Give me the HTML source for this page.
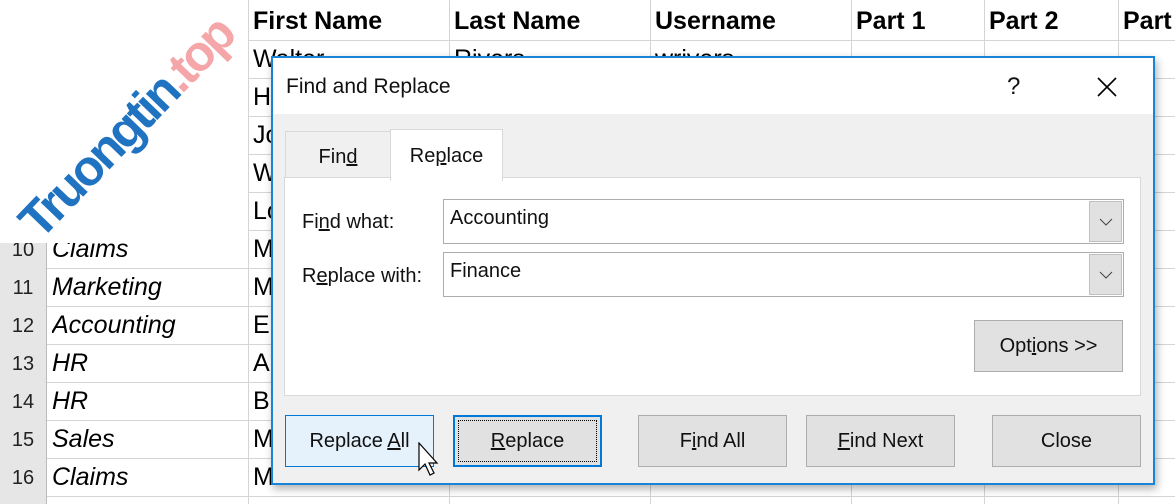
<!DOCTYPE html>
<html><head><style>
*{margin:0;padding:0;box-sizing:border-box}
body{width:1175px;height:504px;overflow:hidden;background:#fff;font-family:"Liberation Sans",sans-serif;position:relative}
.c{position:absolute;font-size:25px;color:#000;white-space:nowrap;overflow:hidden}
.hl{position:absolute;height:1px;background:#d4d4d4;left:0;width:1175px}
.vl{position:absolute;width:1px;background:#d4d4d4;top:0;height:504px}
.rn{position:absolute;left:0;width:47px;background:#e6e6e6;font-size:20px;color:#222;text-align:center;border-right:1px solid #bbb}
.dlg{position:absolute;left:271px;top:56px;width:884px;height:429px;background:#f0f0f0;border:2px solid #1883d7;box-shadow:2px 4px 8px rgba(0,0,0,.3);font-size:20px;color:#111}
.btn{position:absolute;top:357px;height:52px;width:149px;background:#e1e1e1;border:1px solid #adadad;text-align:center;line-height:50px;font-size:20px}
.dd{position:absolute;right:1px;top:1px;width:33px;height:41px;background:#e1e1e1;border:1px solid #c0c0c0}
u{text-decoration:underline}
</style></head><body>
<div class="hl" style="top:40px"></div><div class="hl" style="top:78px"></div><div class="hl" style="top:116px"></div><div class="hl" style="top:154px"></div><div class="hl" style="top:192px"></div><div class="hl" style="top:230px"></div><div class="hl" style="top:268px"></div><div class="hl" style="top:306px"></div><div class="hl" style="top:344px"></div><div class="hl" style="top:382px"></div><div class="hl" style="top:420px"></div><div class="hl" style="top:458px"></div><div class="hl" style="top:496px"></div>
<div class="vl" style="left:248px"></div><div class="vl" style="left:449px"></div><div class="vl" style="left:650px"></div><div class="vl" style="left:851px"></div><div class="vl" style="left:984px"></div><div class="vl" style="left:1118px"></div>
<div class="rn" style="top:230px;height:38px;line-height:40px">10</div>
<div class="rn" style="top:268px;height:38px;line-height:40px">11</div>
<div class="rn" style="top:306px;height:38px;line-height:40px">12</div>
<div class="rn" style="top:344px;height:38px;line-height:40px">13</div>
<div class="rn" style="top:382px;height:38px;line-height:40px">14</div>
<div class="rn" style="top:420px;height:38px;line-height:40px">15</div>
<div class="rn" style="top:458px;height:38px;line-height:40px">16</div>
<div class="rn" style="top:496px;height:8px"></div>
<div class="c" style="left:253px;top:7px;font-weight:bold">First Name</div>
<div class="c" style="left:454px;top:7px;font-weight:bold">Last Name</div>
<div class="c" style="left:655px;top:7px;font-weight:bold">Username</div>
<div class="c" style="left:856px;top:7px;font-weight:bold">Part 1</div>
<div class="c" style="left:989px;top:7px;font-weight:bold">Part 2</div>
<div class="c" style="left:1123px;top:7px;font-weight:bold">Part</div>
<div class="c" style="left:253px;top:45px">Walter</div><div class="c" style="left:454px;top:45px">Rivers</div><div class="c" style="left:655px;top:45px">wrivers</div>
<div class="c" style="left:253px;top:83px">H</div><div class="c" style="left:253px;top:121px">Jo</div><div class="c" style="left:253px;top:159px">W</div><div class="c" style="left:253px;top:197px">Lo</div><div class="c" style="left:253px;top:235px">M</div><div class="c" style="left:253px;top:273px">M</div><div class="c" style="left:253px;top:311px">El</div><div class="c" style="left:253px;top:349px">A</div><div class="c" style="left:253px;top:387px">B</div><div class="c" style="left:253px;top:425px">M</div><div class="c" style="left:253px;top:463px">Maria</div>
<div class="c" style="left:454px;top:463px">Menzies</div><div class="c" style="left:655px;top:463px">mmenzies</div>
<div class="c" style="left:856px;top:463px">X</div><div class="c" style="left:989px;top:463px">X</div><div class="c" style="left:1123px;top:463px">X</div>
<div class="c" style="left:52px;top:235px;font-style:italic">Claims</div>
<div class="c" style="left:52px;top:273px;font-style:italic">Marketing</div>
<div class="c" style="left:52px;top:311px;font-style:italic">Accounting</div>
<div class="c" style="left:52px;top:349px;font-style:italic">HR</div>
<div class="c" style="left:52px;top:387px;font-style:italic">HR</div>
<div class="c" style="left:52px;top:425px;font-style:italic">Sales</div>
<div class="c" style="left:52px;top:463px;font-style:italic">Claims</div>
<div style="position:absolute;left:0;top:0;width:248px;height:243px;overflow:hidden;background:#fff">
<div style="position:absolute;left:10px;top:212px;transform:rotate(-46deg);transform-origin:left top;font-size:50px;font-weight:bold;white-space:nowrap;letter-spacing:-3px;line-height:1"><span style="color:#1f73c0">Truongtin</span><span style="color:#f4a6a8">.top</span></div>
</div>
<div class="dlg">
<div style="position:absolute;left:0;top:0;width:880px;height:56px;background:#fff"></div>
<div style="position:absolute;left:13px;top:17px;font-size:21px">Find and Replace</div>
<div style="position:absolute;left:734px;top:15px;font-size:24px">?</div>
<svg style="position:absolute;left:824px;top:19px" width="20" height="20"><path d="M1 1L19 19M19 1L1 19" stroke="#000" stroke-width="1.6"/></svg>
<div style="position:absolute;left:12px;top:73px;width:106px;height:49px;border:1px solid #d9d9d9;border-bottom:none;text-align:center;line-height:50px">Fin<u>d</u></div>
<div style="position:absolute;left:117px;top:71px;width:113px;height:52px;background:#fff;border:1px solid #d9d9d9;border-bottom:none;text-align:center;line-height:52px;z-index:2">Re<u>p</u>lace</div>
<div style="position:absolute;left:11px;top:119px;width:857px;height:219px;background:#fff;border:1px solid #d9d9d9"></div>
<div style="position:absolute;left:29px;top:153px">Fi<u>n</u>d what:</div>
<div style="position:absolute;left:29px;top:207px">R<u>e</u>place with:</div>
<div style="position:absolute;left:170px;top:141px;width:681px;height:45px;border:1px solid #adadad;background:#fff;padding:7px 6px">Accounting<div class="dd"><svg style="position:absolute;left:9px;top:16px" width="14" height="8"><path d="M1 1L7 7L13 1" stroke="#444" fill="none"/></svg></div></div>
<div style="position:absolute;left:170px;top:194px;width:681px;height:45px;border:1px solid #adadad;background:#fff;padding:7px 6px">Finance<div class="dd"><svg style="position:absolute;left:9px;top:16px" width="14" height="8"><path d="M1 1L7 7L13 1" stroke="#444" fill="none"/></svg></div></div>
<div class="btn" style="left:701px;top:262px">Opt<u>i</u>ons &gt;&gt;</div>
<div class="btn" style="left:12px;background:#e5f1fb;border-color:#0078d7">Replace <u>A</u>ll</div>
<div class="btn" style="left:180px;border:2px solid #0078d7;line-height:48px"><div style="position:absolute;inset:3px;border:1px dotted #000"></div><u>R</u>eplace</div>
<div class="btn" style="left:365px">F<u>i</u>nd All</div>
<div class="btn" style="left:533px"><u>F</u>ind Next</div>
<div class="btn" style="left:719px">Close</div>
<svg style="position:absolute;left:145px;top:384px" width="24" height="38" viewBox="0 0 24 38"><path d="M1 1 L1 28 L7 22 L12 33 L16 31 L11 21 L19 21 Z" fill="#fff" stroke="#000" stroke-width="1.2"/></svg>
</div>
</body></html>
